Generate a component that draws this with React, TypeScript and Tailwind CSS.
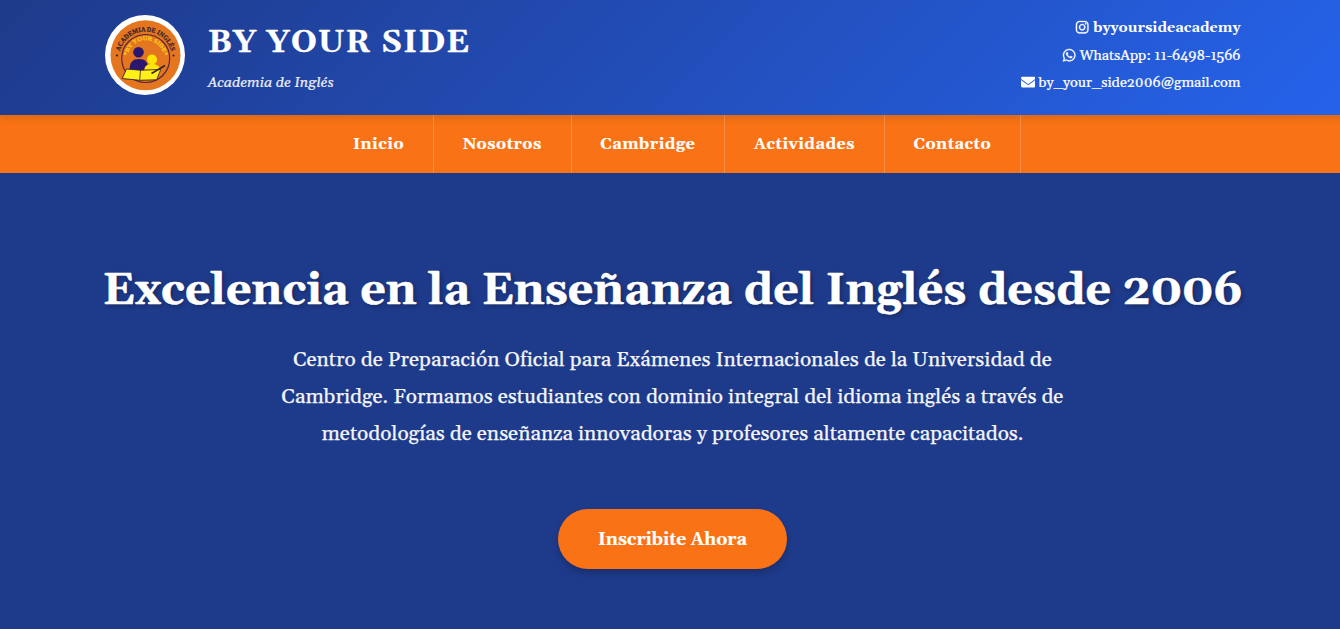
import React from "react";
import { FaInstagram, FaWhatsapp, FaEnvelope } from "react-icons/fa6";

const links = ["Inicio", "Nosotros", "Cambridge", "Actividades", "Contacto"];

function Logo() {
  return (
    <svg viewBox="0 0 80 80" className="h-20 w-20 shrink-0 font-['Liberation_Serif',serif]">
      <defs>
        <path id="outerArc" d="M14 43a26.500 26.500 0 0 1 53 0" />
        <path id="innerArc" d="M22.300 43.500a18.400 18.400 0 0 1 36.800 0" />
      </defs>
      <circle cx="40" cy="40" r="40" fill="#fff" />
      <circle cx="40.5" cy="40.3" r="35" fill="#e4761f" />
      <circle cx="40.7" cy="43.500" r="24" fill="none" stroke="#5a2440" strokeWidth="1.2" />
      <text fontSize="6.8" fontWeight="700" fill="#38202c" stroke="#38202c" strokeWidth="0.25">
        <textPath href="#outerArc" startOffset="50%" textAnchor="middle" textLength="69" lengthAdjust="spacingAndGlyphs">ACADEMIA DE INGLÉS</textPath>
      </text>
      <text fontSize="5.8" fontWeight="700" fill="#fcc419" stroke="#fcc419" strokeWidth="0.25">
        <textPath href="#innerArc" startOffset="50%" textAnchor="middle" textLength="52" lengthAdjust="spacingAndGlyphs">*BY YOUR SIDE*</textPath>
      </text>
      <circle cx="12" cy="40.5" r="1.100" fill="#38202c" />
      <circle cx="68.5" cy="40.5" r="1.100" fill="#38202c" />
      <circle cx="33.5" cy="37.2" r="5.3" fill="#2b1770" />
      <path d="M24.500 56c0-9 3-12 9.500-12s9 3 9 10v3H25z" fill="#2b1770" />
      <circle cx="47" cy="44.5" r="5" fill="#ffe500" />
      <path d="M39 57c0-6 3-8 8-8s8 2 8 7v3H39z" fill="#ffe500" />
      <path d="M21.500 54l14 1.200 20.200-.7-4 10.300-17.200.5-17.300-1.800z" fill="#fff01a" stroke="#38202c" strokeWidth="0.9" />
      <path d="M35.500 55l-.8 10" stroke="#38202c" strokeWidth="0.800" fill="none" />
      <path d="M46.500 58.500l13.500-8" stroke="#38202c" strokeWidth="1.500" fill="none" />
    </svg>
  );
}

export default function App() {
  return (
    <div className="h-[629px] w-full overflow-hidden bg-[#1e3a8a] font-['Georgia','Gelasio','Liberation_Serif',serif] text-white [font-variant-ligatures:none]">
      <div className="w-[1345px]">
        <header className="relative z-10 h-[115px] bg-linear-135 from-[#1e3a8a] to-[#2563eb] shadow-[0_4px_6px_rgba(0,0,0,0.1)]">
          <div className="mx-auto flex h-[110px] w-[1136px] items-center justify-between">
            <div className="flex items-center gap-[23px]">
              <Logo />
              <div className="pb-px">
                <h1 className="text-[32px] font-bold leading-[57px] tracking-[1px] [-webkit-text-stroke:0.3px]">BY YOUR SIDE</h1>
                <p className="text-[14.4px] italic leading-[25px] opacity-90 [-webkit-text-stroke:0.2px]">Academia de Inglés</p>
              </div>
            </div>
            <div className="pt-px text-right text-[14.4px] leading-[27px]">
              <p className="font-bold"><FaInstagram className="inline -translate-y-px stroke-[12]" /> byyoursideacademy</p>
              <p className="leading-[28px] [-webkit-text-stroke:0.2px]"><FaWhatsapp className="inline -translate-y-px stroke-[12]" /> WhatsApp: 11-6498-1566</p>
              <p className="pb-px leading-[26px] [-webkit-text-stroke:0.2px]"><FaEnvelope className="inline -translate-y-px" /> by_your_side2006@gmail.com</p>
            </div>
          </div>
        </header>
        <nav className="flex h-[58px] justify-center bg-[#f97316] text-[16px] font-bold leading-[58px] tracking-[0.5px]">
          {links.map((l) => (
            <a key={l} className="border-r border-white/20 px-[28.8px] [-webkit-text-stroke:0.2px]">{l}</a>
          ))}
        </nav>
        <section className="flex flex-col items-center text-center">
          <h2 className="mt-[83px] text-[44.8px] font-bold leading-[70px] [-webkit-text-stroke:0.5px] [text-shadow:2px_2px_4px_rgba(0,0,0,0.3)]">Excelencia en la Enseñanza del Inglés desde 2006</h2>
          <p className="mt-4 text-[20.8px] leading-[37px] opacity-95 [-webkit-text-stroke:0.25px]">Centro de Preparación Oficial para Exámenes Internacionales de la Universidad de<br />Cambridge. Formamos estudiantes con dominio integral del idioma inglés a través de<br />metodologías de enseñanza innovadoras y profesores altamente capacitados.</p>
          <a className="mt-14 h-[60px] rounded-full bg-[#f97316] px-10 text-[17.6px] font-bold leading-[62px] shadow-[0_4px_6px_rgba(0,0,0,0.2)] [-webkit-text-stroke:0.2px]">Inscribite Ahora</a>
        </section>
      </div>
    </div>
  );
}
